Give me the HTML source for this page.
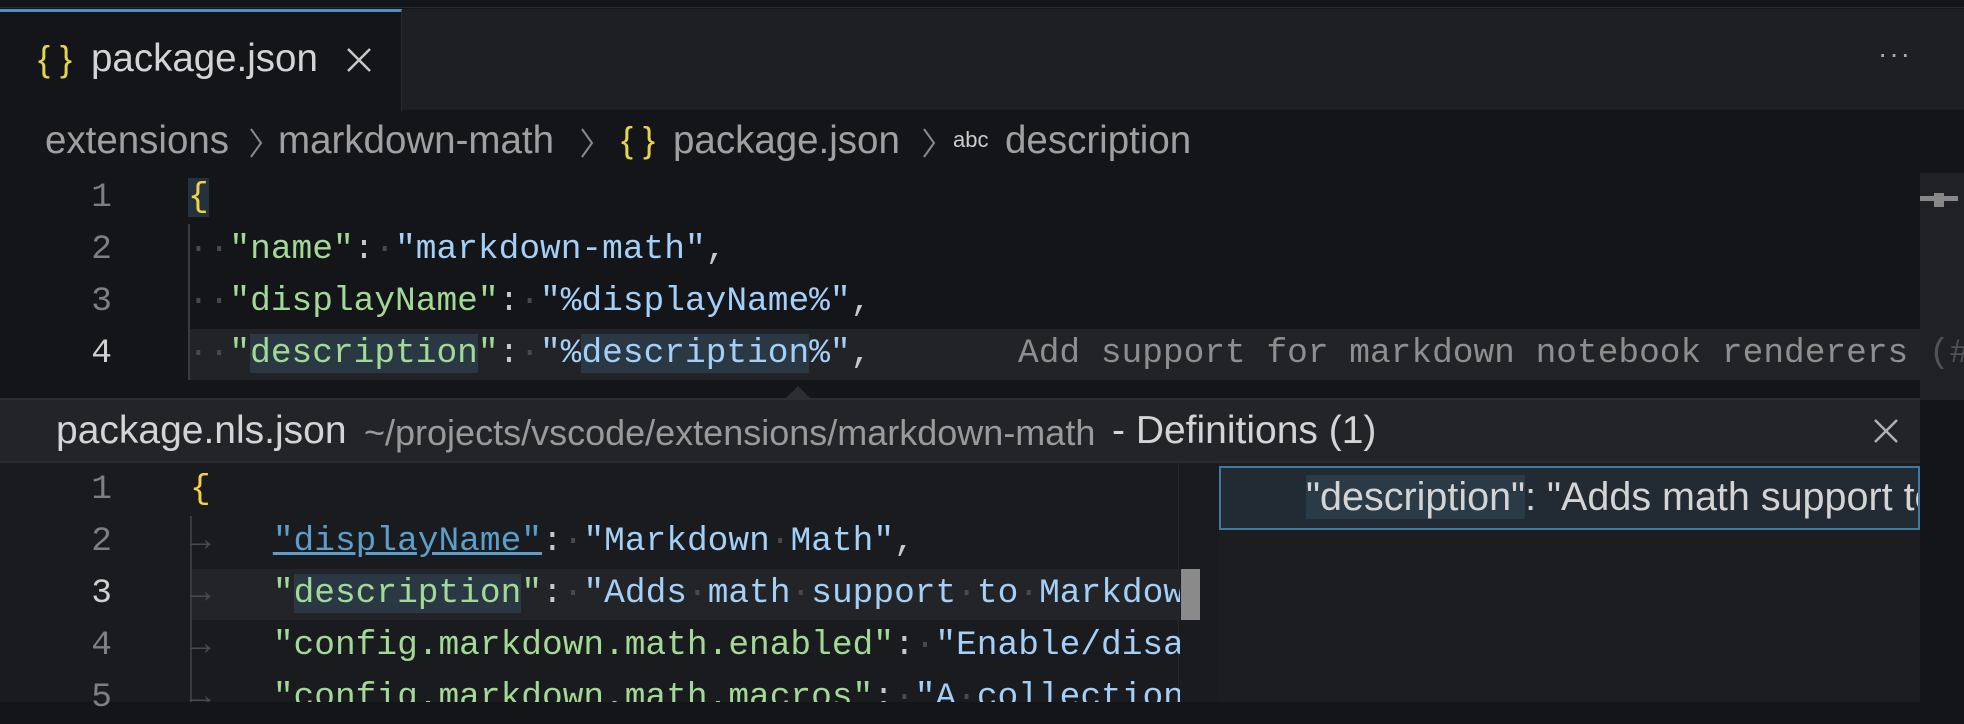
<!DOCTYPE html>
<html><head><meta charset="utf-8"><style>
*{margin:0;padding:0;box-sizing:border-box}
body{width:1964px;height:702px;overflow:hidden;background:#141518;position:relative;font-family:"Liberation Sans",sans-serif}
.a{position:absolute;white-space:pre}
.m{font-family:"Liberation Mono",monospace;font-size:34.5px;line-height:52px}
.ln{width:112px;text-align:right;color:#7d7f84}
.k{color:#a3d996}.s{color:#a4cff7}.p{color:#c8c8c8}.y{color:#f2d147}.d{color:#47494d}
.hl{background:#2a3844}
.bc{font-size:38.5px;color:#a0a0a0;top:119px}
</style></head><body>
<div class="a" style="left:0;top:0;width:1964px;height:8px;background:#141518;border-bottom:1px solid #2a2b2e"></div>
<div class="a" style="left:0;top:9px;width:1964px;height:101px;background:#1e1f22;border-bottom:1px solid #1a1b1d"></div>
<div class="a" style="left:0;top:9px;width:402px;height:102px;background:#141518;border-top:3px solid #4e8fbf;border-right:1px solid #2a2b2e"></div>
<div class="a" style="left:38px;top:38px;font-size:36px;color:#e6d44f">{ }</div>
<div class="a" style="left:91px;top:37px;font-size:38.5px;color:#d4d4d4">package.json</div>
<svg class="a" style="left:346px;top:47px" width="26" height="26"><path d="M2 2L24 24M24 2L2 24" stroke="#c8c8c8" stroke-width="2.5"/></svg>
<div class="a" style="left:1878px;top:38px;font-size:28px;color:#aaa;letter-spacing:2px">···</div>

<div class="a bc" style="left:45px">extensions</div>
<svg class="a" style="left:248px;top:127px" width="16" height="32"><path d="M3 2L13 16L3 30" stroke="#8a8a8a" stroke-width="2" fill="none"/></svg>
<div class="a bc" style="left:278px">markdown-math</div>
<svg class="a" style="left:579px;top:127px" width="16" height="32"><path d="M3 2L13 16L3 30" stroke="#8a8a8a" stroke-width="2" fill="none"/></svg>
<div class="a bc" style="left:621px;color:#e6d44f;font-size:36px">{ }</div>
<div class="a bc" style="left:673px">package.json</div>
<svg class="a" style="left:921px;top:127px" width="16" height="32"><path d="M3 2L13 16L3 30" stroke="#8a8a8a" stroke-width="2" fill="none"/></svg>
<div class="a" style="left:953px;top:127px;font-size:22px;color:#ccc">abc</div>
<div class="a bc" style="left:1005px">description</div>

<div class="a" style="left:188px;top:329px;width:1732px;height:51px;background:#222326"></div>
<div class="a" style="left:188px;top:224px;width:2px;height:156px;background:#3a3b3e"></div>
<div class="a m ln" style="left:0;top:172px">1</div>
<div class="a m ln" style="left:0;top:224px">2</div>
<div class="a m ln" style="left:0;top:276px">3</div>
<div class="a m ln" style="left:0;top:328px;color:#d0d0d0">4</div>
<div class="a m" style="left:188px;top:172px"><span class="y" style="background:#24323d">{</span></div>
<div class="a m" style="left:188px;top:224px"><span class="d">··</span><span class="k">"name"</span><span class="p">:</span><span class="d">·</span><span class="s">"markdown-math"</span><span class="p">,</span></div>
<div class="a m" style="left:188px;top:276px"><span class="d">··</span><span class="k">"displayName"</span><span class="p">:</span><span class="d">·</span><span class="s">"%displayName%"</span><span class="p">,</span></div>
<div class="a m" style="left:188px;top:328px"><span class="d">··</span><span class="k">"<span class="hl">description</span>"</span><span class="p">:</span><span class="d">·</span><span class="s">"%<span class="hl">description</span>%"</span><span class="p">,</span></div>
<div class="a m" style="left:1018px;top:328px;color:#8e8e8e">Add support for markdown notebook renderers (#</div>
<div class="a" style="left:1920px;top:173px;width:44px;height:227px;background:rgba(40,41,45,0.6)"></div>
<div class="a" style="left:1920px;top:196px;width:38px;height:5px;background:#888"></div>
<div class="a" style="left:1934px;top:193px;width:10px;height:14px;background:#888"></div>

<div class="a" style="left:786px;top:386px;width:0;height:0;border-left:12px solid transparent;border-right:12px solid transparent;border-bottom:12px solid #2d2e31"></div>
<div class="a" style="left:0;top:398px;width:1920px;height:65px;background:#232427;border-top:2px solid #2d2e31;border-bottom:2px solid #2a2b2e"></div>
<div class="a" style="left:56px;top:409px;font-size:39px;color:#d4d4d4">package.nls.json</div>
<div class="a" style="left:364px;top:412px;font-size:36px;color:#9a9a9a">~/projects/vscode/extensions/markdown-math</div>
<div class="a" style="left:1112px;top:409px;font-size:39px;color:#d4d4d4">- Definitions (1)</div>
<svg class="a" style="left:1873px;top:418px" width="26" height="26"><path d="M2 2L24 24M24 2L2 24" stroke="#b0b0b0" stroke-width="2.5"/></svg>

<div class="a" style="left:0;top:463px;width:1219px;height:239px;background:#1a1b1e"></div>
<div class="a" style="left:1178px;top:463px;width:1px;height:239px;background:#26272a"></div>
<div class="a" style="left:1219px;top:463px;width:701px;height:239px;background:#1c1d20"></div>
<div class="a" style="left:1219px;top:466px;width:701px;height:64px;background:#222a33;border:2px solid #3f7aa0"></div>
<div class="a" style="left:1219px;top:472px;width:699px;height:52px;overflow:hidden"><div class="a" style="left:87px;top:3px;font-size:39.5px;color:#d4d4d4"><span style="background:#2b3a47">"description"</span>: "Adds math support to</div></div>

<div class="a" style="left:190px;top:569px;width:990px;height:51px;background:#232427"></div>
<div class="a" style="left:190px;top:516px;width:2px;height:186px;background:#3a3b3e"></div>
<div class="a" style="left:1181px;top:569px;width:19px;height:51px;background:#8a8a8a"></div>
<div class="a m ln" style="left:0;top:464px">1</div>
<div class="a m ln" style="left:0;top:516px">2</div>
<div class="a m ln" style="left:0;top:568px;color:#d0d0d0">3</div>
<div class="a m ln" style="left:0;top:620px">4</div>
<div class="a m ln" style="left:0;top:672px">5</div>
<div class="a" style="left:190px;top:464px;width:990px;height:238px;overflow:hidden">
<div class="a m" style="left:0;top:0"><span class="y">{</span></div>
<div class="a m" style="left:0;top:52px"><span class="d">→</span>   <span style="color:#5b9ec9;text-decoration:underline">"displayName"</span><span class="p">:</span><span class="d">·</span><span class="s">"Markdown<span class="d">·</span>Math"</span><span class="p">,</span></div>
<div class="a m" style="left:0;top:104px"><span class="d">→</span>   <span class="k">"<span class="hl">description</span>"</span><span class="p">:</span><span class="d">·</span><span class="s">"Adds<span class="d">·</span>math<span class="d">·</span>support<span class="d">·</span>to<span class="d">·</span>Markdown<span class="d">·</span>notebooks"</span></div>
<div class="a m" style="left:0;top:156px"><span class="d">→</span>   <span class="k">"config.markdown.math.enabled"</span><span class="p">:</span><span class="d">·</span><span class="s">"Enable/disable"</span></div>
<div class="a m" style="left:0;top:208px"><span class="d">→</span>   <span class="k">"config.markdown.math.macros"</span><span class="p">:</span><span class="d">·</span><span class="s">"A<span class="d">·</span>collection<span class="d">·</span>of"</span></div>
</div>
</body></html>
